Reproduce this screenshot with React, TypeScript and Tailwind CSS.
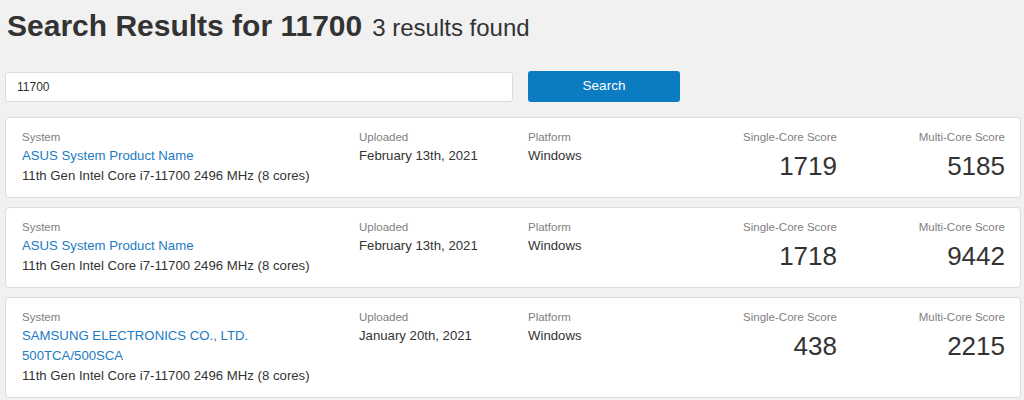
import React from "react";

type Result = {
  system: string;
  cpu: string;
  uploaded: string;
  platform: string;
  single: number;
  multi: number;
};

const results: Result[] = [
  {
    system: "ASUS System Product Name",
    cpu: "11th Gen Intel Core i7-11700 2496 MHz (8 cores)",
    uploaded: "February 13th, 2021",
    platform: "Windows",
    single: 1719,
    multi: 5185,
  },
  {
    system: "ASUS System Product Name",
    cpu: "11th Gen Intel Core i7-11700 2496 MHz (8 cores)",
    uploaded: "February 13th, 2021",
    platform: "Windows",
    single: 1718,
    multi: 9442,
  },
  {
    system: "SAMSUNG ELECTRONICS CO., LTD. 500TCA/500SCA",
    cpu: "11th Gen Intel Core i7-11700 2496 MHz (8 cores)",
    uploaded: "January 20th, 2021",
    platform: "Windows",
    single: 438,
    multi: 2215,
  },
];

const Label = ({ children }: { children: React.ReactNode }) => (
  <div className="text-[11.5px] leading-[18px] text-[#808080]">{children}</div>
);

const ResultCard = ({ r }: { r: Result }) => (
  <div className="w-[1016px] bg-white border border-[#dcdcdc] rounded-[4px] pl-4 pr-[15px] pt-[10px] pb-[11px] grid grid-cols-[337px_169px_141px_168px_168px]">
    <div className="pr-[30px]">
      <Label>System</Label>
      <a className="block text-[13.2px] leading-[20px] text-[#1c7bc3] cursor-pointer">
        {r.system}
      </a>
      <div className="text-[13.2px] leading-[20px] text-[#333]">{r.cpu}</div>
    </div>
    <div>
      <Label>Uploaded</Label>
      <div className="text-[13.2px] leading-[20px] text-[#333]">{r.uploaded}</div>
    </div>
    <div>
      <Label>Platform</Label>
      <div className="text-[13.2px] leading-[20px] text-[#333]">{r.platform}</div>
    </div>
    <div className="text-right">
      <Label>Single-Core Score</Label>
      <div className="text-[26px] leading-[40px] text-[#333]">{r.single}</div>
    </div>
    <div className="text-right">
      <Label>Multi-Core Score</Label>
      <div className="text-[26px] leading-[40px] text-[#333]">{r.multi}</div>
    </div>
  </div>
);

export default function App() {
  return (
    <div className="min-h-[400px] w-[1024px] overflow-hidden bg-[#f1f1f1] font-['Liberation_Sans',Arial,sans-serif] text-[#333]">
      <div className="pl-[7px] pt-[9px]">
        <h1 className="leading-[33px] text-[#333]">
          <span className="text-[30px] font-bold">Search Results for 11700</span>
          <span className="text-[24px] ml-[10px]">3 results found</span>
        </h1>
      </div>

      <div className="flex items-center gap-[15px] pl-[5px] mt-[24px]">
        <div className="w-[508px] h-[30px] bg-white border border-[#dcdcdc] rounded-[3px] flex items-center pl-[11px] text-[12px] text-[#333]">
          11700
        </div>
        <button className="w-[152px] h-[31px] bg-[#0b7bc2] rounded-[3px] text-white text-[13.5px]">
          Search
        </button>
      </div>

      <div className="flex flex-col gap-[9px] pl-[5px] mt-[15px]">
        {results.map((r, i) => (
          <ResultCard key={i} r={r} />
        ))}
      </div>
    </div>
  );
}
